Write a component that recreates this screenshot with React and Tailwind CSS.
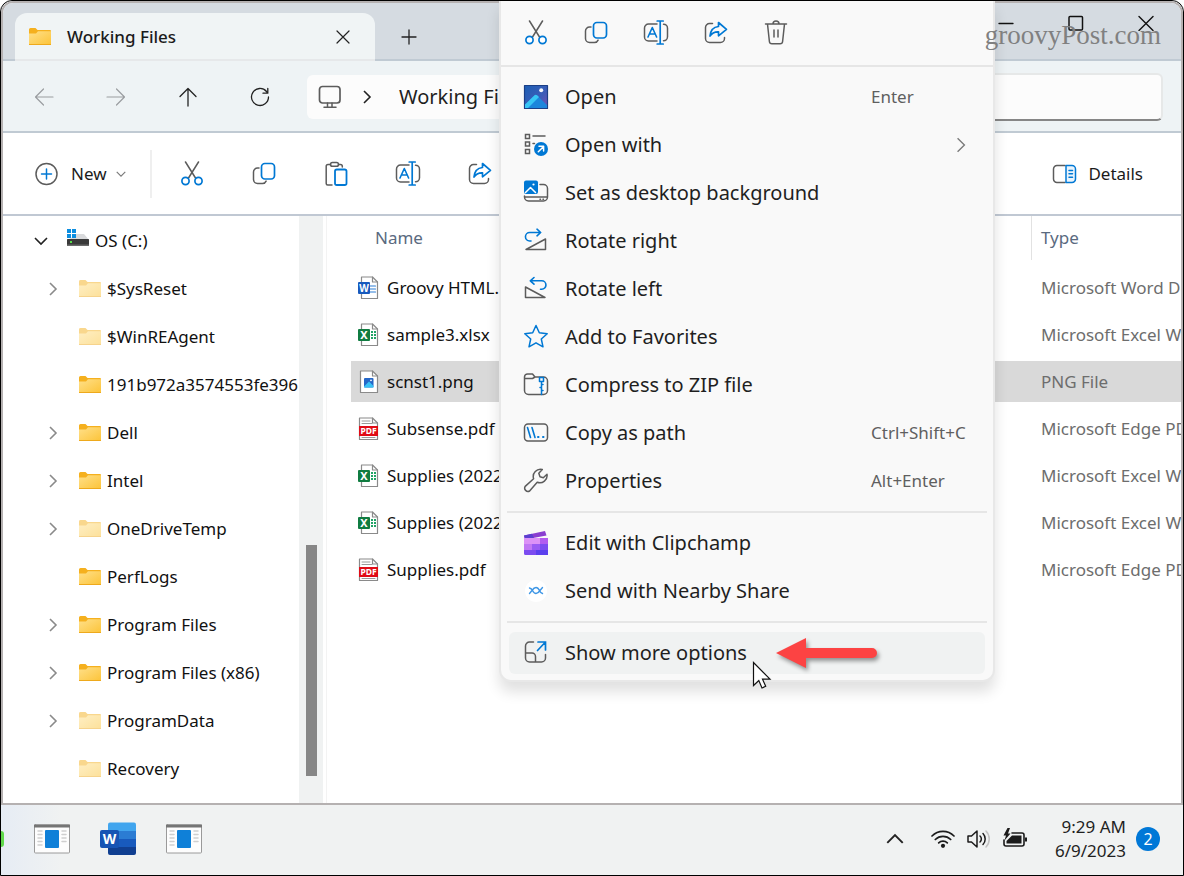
import React from "react";

const G = "#5c5c5c";
const B = "#0078d4";

function Icon({ w, h, children, className = "" }) {
  return (
    <svg
      width={w}
      height={h}
      viewBox={`0 0 ${w} ${h}`}
      fill="none"
      strokeLinecap="round"
      strokeLinejoin="round"
      className={`shrink-0 ${className}`}
      aria-hidden="true"
    >
      {children}
    </svg>
  );
}

const Cut = () => (
  <Icon w={24} h={26}>
    <path d="M5.500 1 15.500 17M18.500 1 8.500 17" stroke={G} strokeWidth="1.500" />
    <circle cx="5.500" cy="20" r="3.600" stroke={B} strokeWidth="1.700" fill="#fff" />
    <circle cx="18.500" cy="20" r="3.600" stroke={B} strokeWidth="1.700" fill="#fff" />
  </Icon>
);

const Copy = () => (
  <Icon w={24} h={26}>
    <path d="M7 7H5.500a4 4 0 0 0-4 4V18.500a4 4 0 0 0 4 4h5a4 4 0 0 0 3.600-2.400" stroke={G} strokeWidth="1.500" />
    <rect x="9.500" y="2.500" width="13" height="15.500" rx="3.400" stroke={B} strokeWidth="1.700" />
  </Icon>
);

const Paste = () => (
  <Icon w={24} h={26}>
    <path d="M6.500 3.500H4A1.8 1.8 0 0 0 2.200 5.300V22.500A1.500 1.500 0 0 0 3.700 24H8M14.500 3.500H16.500A1.800 1.800 0 0 1 18.300 5.300V6" stroke={G} strokeWidth="1.500" />
    <rect x="6.500" y="1.500" width="8" height="3.800" rx="1.900" stroke={G} strokeWidth="1.500" />
    <rect x="11" y="8.500" width="11.500" height="15.500" rx="1.800" stroke={B} strokeWidth="1.800" />
  </Icon>
);

const Rename = () => (
  <Icon w={26} h={26}>
    <path d="M14 4H5.500a4 4 0 0 0-4 4v9a4 4 0 0 0 4 4H14M20.500 4.200a4 4 0 0 1 4 4v8.600a4 4 0 0 1-4 4" stroke={G} strokeWidth="1.500" />
    <path d="M5 17 9.300 7.500l4.300 9.500M6.500 14h5.600" stroke={B} strokeWidth="1.600" />
    <path d="M17.200 1v23M14.200 1h6M14.200 24h6" stroke={B} strokeWidth="1.700" />
  </Icon>
);

const Share = () => (
  <Icon w={24} h={26}>
    <path d="M8.500 3.500H5.500a4 4 0 0 0-4 4v11a4 4 0 0 0 4 4h11a4 4 0 0 0 4-4v-1" stroke={G} strokeWidth="1.500" />
    <path d="M14.500 2.500 22.500 9.300l-8 6.500v-4C10.500 11.600 8 12.800 6 16 6.500 10.500 9.500 7 14.500 6.500Z" stroke={B} strokeWidth="1.700" />
  </Icon>
);

const Trash = () => (
  <Icon w={24} h={26}>
    <path d="M1.500 4h21M3.500 4l1.900 17.500a2.500 2.500 0 0 0 2.500 2.300h8.200a2.500 2.500 0 0 0 2.500-2.300L20.500 4M9 4a3 3 0 0 1 6 0M10 10v7M14 10v7" stroke={G} strokeWidth="1.500" />
  </Icon>
);

const Folder = ({ faded }) => (
  <Icon w={22} h={18} className={faded ? "opacity-50" : ""}>
    <defs>
      <linearGradient id="folderFace" x1="0" y1="0" x2="1" y2="1">
        <stop offset="0" stopColor="#ffe08a" />
        <stop offset="1" stopColor="#fcc43a" />
      </linearGradient>
    </defs>
    <path d="M0 1.500A1.500 1.500 0 0 1 1.500 0H6.500L8.500 2H21a1 1 0 0 1 1 1V8H0Z" fill="#f5b01e" />
    <path d="M0 5.500H7L9 3.200H22V16.500H0Z" fill="url(#folderFace)" />
    <path d="M0 16.500H22" stroke="#eea91c" strokeWidth="1" strokeLinecap="butt" />
  </Icon>
);

const Drive = () => (
  <Icon w={22} h={18}>
    <path d="M4 9 8 5H17L22 11H0Z" fill="#d9dadc" />
    <rect x="0" y="10" width="22" height="7" rx="0.500" fill="#3a3a3a" />
    <rect x="0" y="15.500" width="22" height="1.500" fill="#6b6b6b" />
    <rect x="3" y="12" width="2" height="2" fill="#57e04a" />
    <path d="M0 0H4V4H0ZM5 0H9V4H5ZM0 5H4V9H0ZM5 5H9V9H5Z" fill="#0c8ee0" />
  </Icon>
);

const Chevron = ({ dir = "right", color = "#7a7a7a", size = 14, sw = 1.6 }) => {
  const d = {
    right: "M4 1 10 7 4 13",
    down: "M1 4 7 10 13 4",
    up: "M1 10 7 4 13 10",
  }[dir];
  return (
    <svg width={size} height={size} viewBox="0 0 14 14" fill="none" stroke={color} strokeWidth={sw} className="shrink-0" aria-hidden="true">
      <path d={d} />
    </svg>
  );
};

const Sheet = ({ children, dx = 3 }) => (
  <Icon w={22} h={24}>
    <path d={`M${dx + 0.500} 1H14.500L19.500 6V22.500H${dx + 0.500}Z`} fill="#fff" stroke="#8a8a8a" strokeWidth="1.200" />
    <path d="M14.500 1V6H19.500" stroke="#8a8a8a" strokeWidth="1.200" />
    {children}
  </Icon>
);

const glyph = { fill: "#fff", fontFamily: "Noto Sans, sans-serif", fontWeight: 700, textAnchor: "middle" };

const WordFile = () => (
  <Sheet>
    <path d="M12 10H17.500M12 13H17.500M12 16H17.500" stroke="#2b7cd3" strokeWidth="1.200" />
    <rect x="0" y="6" width="12" height="12" rx="1" fill="#185abd" />
    <text x="6" y="15.500" fontSize="10" {...glyph}>W</text>
  </Sheet>
);
const ExcelFile = () => (
  <Sheet>
    <path d="M13 9H18M13 12H18M13 15H18" stroke="#21a366" strokeWidth="1.800" strokeDasharray="2 1" strokeLinecap="butt" />
    <rect x="0" y="6" width="12" height="12" rx="1" fill="#107c41" />
    <text x="6" y="16" fontSize="11" {...glyph}>X</text>
  </Sheet>
);
const PdfFile = () => (
  <Sheet dx={1}>
    <path d="M4 4H12M4 6.500H14M4 20.500H17" stroke="#9a9a9a" strokeWidth="1" />
    <rect x="1" y="9" width="19" height="10" fill="#e00b16" />
    <text x="10.500" y="17" fontSize="8.500" {...glyph}>PDF</text>
  </Sheet>
);
const PngFile = () => (
  <Sheet dx={2}>
    <rect x="6" y="8" width="9.500" height="9.500" rx="1" fill="#2567c8" />
    <path d="M6 16.500 11 11.500 15.500 16v1.500H6Z" fill="#39c2f5" />
    <circle cx="13" cy="10.300" r="0.900" fill="#fff" />
  </Sheet>
);

const PhotosApp = () => (
  <Icon w={26} h={26}>
    <defs>
      <linearGradient id="photoSky" x1="0" y1="0" x2="1" y2="1">
        <stop offset="0" stopColor="#1c5fb4" />
        <stop offset="0.600" stopColor="#3c5cb8" />
        <stop offset="1" stopColor="#7a4fb5" />
      </linearGradient>
    </defs>
    <rect x="1.500" y="1.500" width="23" height="23" fill="url(#photoSky)" stroke="#1b3f86" strokeWidth="1.200" />
    <path d="M2 21 11.500 11.500a2 2 0 0 1 2.600 0L24 21V24H2Z" fill="#1c86dc" />
    <path d="M2 20.500 11.500 11.200a2 2 0 0 1 2.600 0L16 13 5 24H2Z" fill="#37c5f5" />
    <circle cx="18.200" cy="6.300" r="2" fill="#f3f6fb" />
  </Icon>
);
const OpenWith = () => (
  <Icon w={26} h={26}>
    <path d="M2.500 2.500H6.500V6.500H2.500ZM2.500 10H6.500V14H2.500ZM2.500 17.500H6.500V21.500H2.500ZM10 4H22M10 11.500H11.500" stroke={G} strokeWidth="1.500" strokeLinejoin="miter" />
    <circle cx="18" cy="17" r="7" fill={B} />
    <path d="M15.300 19.800 20.300 14.700M16 14.300H20.600V18.900" stroke="#fff" strokeWidth="1.500" />
  </Icon>
);
const DesktopBg = () => (
  <Icon w={26} h={26}>
    <path d="M17 4.500H20.500A4 4 0 0 1 24.500 8.500V17A4 4 0 0 1 20.500 21H5.500A4 4 0 0 1 1.500 17V16M1.500 17H24.500M17 19.200H17.500M20 19.200H20.500" stroke={G} strokeWidth="1.500" />
    <rect x="1" y="0.500" width="14" height="13.500" rx="2" fill={B} />
    <path d="M2.500 12.500 7.500 7.500 12.500 12.500" stroke="#fff" strokeWidth="1.500" />
    <circle cx="10.500" cy="4.500" r="1.100" fill="#fff" />
  </Icon>
);
const RotateR = () => (
  <Icon w={26} h={26}>
    <path d="M8 13H6.700A4.200 4.200 0 0 1 6.700 4.500H17.500M14 1.200 17.700 4.500 14 7.800" stroke={B} strokeWidth="1.600" />
    <path d="M3 21.500H22.500V11Z" stroke={G} strokeWidth="1.500" />
  </Icon>
);
const RotateL = () => (
  <Icon w={26} h={26}>
    <path d="M17.500 13.300H18.700A4.200 4.200 0 0 0 18.700 4.800H7.500M11 1.500 7.300 4.800 11 8.100" stroke={B} strokeWidth="1.600" />
    <path d="M2.500 21.500V11L22 21.500Z" stroke={G} strokeWidth="1.500" />
  </Icon>
);
const Star = () => (
  <Icon w={26} h={26}>
    <path d="M13 1.500 16.300 8.800 24.200 9.700 18.300 15 20 22.800 13 18.800 6 22.800 7.700 15 1.800 9.700 9.700 8.800Z" stroke={B} strokeWidth="1.500" />
  </Icon>
);
const Zip = () => (
  <Icon w={26} h={26}>
    <path d="M1.500 6.500V5A3 3 0 0 1 4.500 2H9.500L12 5H20.500A4 4 0 0 1 24.500 9V18.500A4 4 0 0 1 20.500 22.500H5.500A4 4 0 0 1 1.500 18.500V6.500H9.500L12 5" stroke={G} strokeWidth="1.500" />
    <path d="M16.500 5.500H20.500V9.500H16.500ZM18.500 9.500V22.500M18.500 12.500H20M18.500 15.500H17M18.500 18.500H20" stroke={B} strokeWidth="1.500" />
  </Icon>
);
const CopyPath = () => (
  <Icon w={26} h={26}>
    <rect x="1.500" y="4" width="23" height="17" rx="3.500" stroke={G} strokeWidth="1.500" />
    <path d="M4.500 7.500 7.500 17.500M9 7.500 12 17.500" stroke={B} strokeWidth="1.600" />
    <path d="M15 17H15.500M20 17H20.500" stroke={B} strokeWidth="2" />
  </Icon>
);
const Wrench = () => (
  <Icon w={26} h={26}>
    <path d="M19.300 1.600 15.800 5.300 17 8.700 20.300 9.700 24 6.300A7.300 7.300 0 0 1 14.200 14.300L6.600 23A3.300 3.300 0 0 1 2.200 18.400L10.600 10.700A7.200 7.200 0 0 1 19.300 1.600Z" stroke={G} strokeWidth="1.500" />
  </Icon>
);
const Clipchamp = () => (
  <Icon w={26} h={26}>
    <path d="M1 5.500 22 1 23.500 5.500 2 9.500Z" fill="#8a3fd0" />
    <path d="M1 5.500 9 3.800 11 7.900 2 9.500Z" fill="#5b3fd0" />
    <path d="M1 8H25V23.500A1.500 1.500 0 0 1 23.500 25H2.500A1.500 1.500 0 0 1 1 23.500Z" fill="#7c4cf0" />
    <path d="M1 8H17V14H1Z" fill="#dc92f7" />
    <path d="M17 8H25V14H17Z" fill="#b25cf0" />
    <path d="M1 14H9V20H1Z" fill="#c178f4" />
    <path d="M9 14H17V20H9Z" fill="#9a5cf3" />
    <path d="M13 20H25V25H13Z" fill="#5b40ee" />
  </Icon>
);
const Nearby = () => (
  <Icon w={26} h={26}>
    <circle cx="13" cy="13" r="11" fill="#fff" />
    <path d="M6.500 10Q8.500 10.500 9.500 12.500 11 15.500 13 15.500 15 15.500 17 12.500L19.500 9.500M6.500 15.500 9 12.500Q11 9.500 13 9.500 15 9.500 16.500 12.500 17.500 15 19.500 15.500" stroke="#3f97e6" strokeWidth="1.400" />
  </Icon>
);
const MoreOpts = () => (
  <Icon w={26} h={26}>
    <path d="M10.500 2H6.500A4 4 0 0 0 2.500 6V18A4 4 0 0 0 6.500 22H18.500A4 4 0 0 0 22.500 18V14.500M2.500 13H9A3.500 3.500 0 0 1 12.500 16.500V22" stroke={G} strokeWidth="1.500" />
    <path d="M14.500 10.500 22 2.500M15 2H22.500V10" stroke={B} strokeWidth="1.700" strokeLinejoin="miter" />
  </Icon>
);

const MENU = [
  [PhotosApp, "Open", "Enter"],
  [OpenWith, "Open with", ">"],
  [DesktopBg, "Set as desktop background"],
  [RotateR, "Rotate right"],
  [RotateL, "Rotate left"],
  [Star, "Add to Favorites"],
  [Zip, "Compress to ZIP file"],
  [CopyPath, "Copy as path", "Ctrl+Shift+C"],
  [Wrench, "Properties", "Alt+Enter"],
];
const MENU2 = [
  [Clipchamp, "Edit with Clipchamp"],
  [Nearby, "Send with Nearby Share"],
];

const TREE = [
  ["$SysReset", true, true],
  ["$WinREAgent", false, true],
  ["191b972a3574553fe396", false, false],
  ["Dell", true, false],
  ["Intel", true, false],
  ["OneDriveTemp", true, true],
  ["PerfLogs", false, false],
  ["Program Files", true, false],
  ["Program Files (x86)", true, false],
  ["ProgramData", true, true],
  ["Recovery", false, true],
];

const FILES = [
  [WordFile, "Groovy HTML.docx", "Microsoft Word Document"],
  [ExcelFile, "sample3.xlsx", "Microsoft Excel Worksheet"],
  [PngFile, "scnst1.png", "PNG File"],
  [PdfFile, "Subsense.pdf", "Microsoft Edge PDF Document"],
  [ExcelFile, "Supplies (2022).xlsx", "Microsoft Excel Worksheet"],
  [ExcelFile, "Supplies (2022).xlsx", "Microsoft Excel Worksheet"],
  [PdfFile, "Supplies.pdf", "Microsoft Edge PDF Document"],
];

function MenuItem({ item, active }) {
  const [I, label, extra] = item;
  return (
    <button
      type="button"
      role="menuitem"
      className={`mx-2 my-[3px] flex h-[42px] items-center rounded-md pl-3.5 text-left text-xl text-[#1f1f1f] ${active ? "bg-[#f0f2f2]" : ""}`}
    >
      <I />
      <span className="ml-4 flex-1 whitespace-nowrap">{label}</span>
      {extra === ">" && (
        <span className="mr-4">
          <Chevron size={16} sw={1.2} />
        </span>
      )}
      {extra && extra !== ">" && <span className="w-[114px] whitespace-nowrap text-[17px] text-[#5f5f5f]">{extra}</span>}
    </button>
  );
}

function ContextMenu() {
  return (
    <div
      role="menu"
      aria-label="File actions"
      className="absolute left-[498px] top-0 z-10 flex w-[496px] flex-col rounded-b-xl border-x-2 border-b-2 border-[#e8e8e8] bg-[#f9f9f9] pb-[3px] shadow-[0_10px_14px_rgba(0,0,0,0.12)]"
    >
      <div className="flex h-16 items-center pl-[5px]">
        {[[Cut, "Cut"], [Copy, "Copy"], [Rename, "Rename"], [Share, "Share"], [Trash, "Delete"]].map(([I, n]) => (
          <button key={n} type="button" role="menuitem" aria-label={n} className="flex h-12 w-[60px] items-center justify-center">
            <I />
          </button>
        ))}
      </div>
      <div className="mb-1.5 h-0.5 bg-[#e6e6e6]" />
      {MENU.map((m) => <MenuItem key={m[1]} item={m} />)}
      <div className="mx-1.5 my-1.5 h-0.5 bg-[#e6e6e6]" />
      {MENU2.map((m) => <MenuItem key={m[1]} item={m} />)}
      <div className="mx-1.5 my-1.5 h-0.5 bg-[#e6e6e6]" />
      <MenuItem item={[MoreOpts, "Show more options"]} active />
      <svg width="110" height="42" viewBox="0 0 110 42" className="absolute bottom-[5px] left-[272px] drop-shadow-[2px_3px_2px_rgba(0,0,0,0.4)]" aria-hidden="true">
        <path d="M3 20 33 5V15H99a5 5 0 0 1 0 10H33V35Z" fill="#fc4343" />
      </svg>
      <svg width="20" height="29" viewBox="0 0 20 29" className="absolute -bottom-2.5 left-[251px]" aria-hidden="true">
        <path d="M1.500 1.500V24.500L6.800 19.500 10 27 13.700 25.300 10.500 18.200H18Z" fill="#fff" stroke="#111" strokeWidth="1.200" />
      </svg>
    </div>
  );
}

function TitleBar() {
  return (
    <header className="flex h-[58px] shrink-0 items-end border-b-2 border-[#c0cad3] bg-[#d5dbe1]">
      <div className="-mb-0.5 ml-3 flex h-12 w-[360px] items-center rounded-t-xl border-b-2 border-[#e6e8ea] bg-[#f0f4f5] pl-3.5 pr-4 pt-0.5">
        <Folder />
        <span className="ml-4 flex-1 text-[17px] font-medium text-[#1b1b1b]">Working Files</span>
        <button type="button" aria-label="Close tab" className="flex h-8 w-8 items-center justify-center">
          <Icon w={14} h={14}><path d="M1 1 13 13M13 1 1 13" stroke="#222" strokeWidth="1.200" /></Icon>
        </button>
      </div>
      <button type="button" aria-label="New tab" className="ml-4 flex h-11 w-9 items-center justify-center">
        <Icon w={16} h={16}><path d="M8 1V15M1 8H15" stroke="#222" strokeWidth="1.300" /></Icon>
      </button>
      <div className="ml-auto flex self-start">
        <button type="button" aria-label="Minimize" className="flex h-10 w-[70px] items-center justify-center">
          <Icon w={16} h={16}><path d="M1 8.500H15" stroke="#111" strokeWidth="1.300" /></Icon>
        </button>
        <button type="button" aria-label="Maximize" className="flex h-10 w-[70px] items-center justify-center">
          <Icon w={16} h={16}><rect x="1" y="1.500" width="13.500" height="13.500" rx="1" stroke="#111" strokeWidth="1.500" /></Icon>
        </button>
        <button type="button" aria-label="Close" className="flex h-10 w-[70px] items-center justify-center">
          <Icon w={16} h={16}><path d="M1 1.500 15 15.500M15 1.500 1 15.500" stroke="#111" strokeWidth="1.400" /></Icon>
        </button>
      </div>
    </header>
  );
}

function NavBar() {
  const btn = "flex h-11 w-[72px] items-center justify-center";
  return (
    <nav aria-label="Location" className="flex h-[72px] shrink-0 items-center border-b-2 border-[#c0cad3] bg-[#eef3f5] pl-[5px] pr-[18px] pt-0.5">
      <button type="button" aria-label="Back" className={btn}>
        <Icon w={20} h={20}><path d="M19 10H1.500M9.500 2 1.500 10 9.500 18" stroke="#9a9da0" strokeWidth="1.200" /></Icon>
      </button>
      <button type="button" aria-label="Forward" className={btn}>
        <Icon w={20} h={20}><path d="M1 10H18.500M10.500 2 18.500 10 10.500 18" stroke="#9a9da0" strokeWidth="1.200" /></Icon>
      </button>
      <button type="button" aria-label="Up" className={btn}>
        <Icon w={20} h={20}><path d="M10 19V1.500M2 9.500 10 1.500 18 9.500" stroke="#222" strokeWidth="1.300" /></Icon>
      </button>
      <button type="button" aria-label="Refresh" className={btn}>
        <Icon w={20} h={20}><path d="M18.500 10A8.500 8.500 0 1 1 16.500 4.500L17.500 6M17.800 1.500V6.200H13" stroke="#222" strokeWidth="1.300" /></Icon>
      </button>
      <div className="ml-[11px] flex h-11 flex-1 items-center rounded-md bg-[#fcfcfc] pl-[11px] text-[#1f1f1f]">
        <Icon w={24} h={24}>
          <rect x="1.500" y="1.500" width="20.500" height="16.500" rx="3" stroke={G} strokeWidth="1.700" />
          <path d="M9.500 18V22M14 18V22M6 22.200H18" stroke={G} strokeWidth="1.500" />
        </Icon>
        <span className="ml-[18px]"><Chevron color="#222" size={14} /></span>
        <a href="#working-files" className="ml-[25px] whitespace-nowrap text-xl">Working Files</a>
      </div>
      <input
        type="search"
        aria-label="Search Working Files"
        className="ml-3 h-12 w-[380px] rounded-md border-2 border-[#e6e8e8] border-b-[#868686] bg-[#fcfcfc] px-3 text-lg outline-none"
      />
    </nav>
  );
}

function Toolbar() {
  return (
    <div role="toolbar" aria-label="Commands" className="flex h-[83px] shrink-0 items-center border-b-2 border-[#c0c8d3] bg-white pl-8 text-[17px] text-[#1b1b1b]">
      <button type="button" className="flex items-center">
        <Icon w={24} h={24}>
          <circle cx="11.500" cy="12" r="10.500" stroke={G} strokeWidth="1.500" />
          <path d="M11.500 7V17M6.500 12H16.500" stroke={B} strokeWidth="1.500" />
        </Icon>
        <span className="ml-3">New</span>
        <span className="ml-[9px]"><Chevron dir="down" size={10} sw={1.6} /></span>
      </button>
      <span className="ml-6 h-12 w-0.5 bg-[#efefef]" />
      <div className="ml-1 flex">
        {[[Cut, "Cut"], [Copy, "Copy"], [Paste, "Paste"], [Rename, "Rename"], [Share, "Share"]].map(([I, n]) => (
          <button key={n} type="button" aria-label={n} className="flex h-12 w-[72px] items-center justify-center">
            <I />
          </button>
        ))}
      </div>
      <button type="button" className="ml-auto mr-[38px] flex items-center">
        <Icon w={25} h={20}>
          <path d="M13 1.500H5A3.500 3.500 0 0 0 1.500 5V15A3.500 3.500 0 0 0 5 18.500H13" stroke={G} strokeWidth="1.500" />
          <path d="M14 1.500H20A3.500 3.500 0 0 1 23.500 5V15A3.500 3.500 0 0 1 20 18.500H14ZM17 6.500H20.500M17 9.800H20.500M17 13.200H20.500" stroke={B} strokeWidth="1.500" fill="#eaf4fc" />
        </Icon>
        <span className="ml-[11px]">Details</span>
      </button>
    </div>
  );
}

function Sidebar() {
  return (
    <aside className="flex w-[324px] shrink-0">
      <ul className="min-w-0 flex-1 overflow-hidden pt-px text-[17px] text-[#111]">
        <li>
          <button type="button" className="flex h-12 w-full items-center pl-[31px]">
            <Chevron dir="down" color="#222" />
            <span className="-mt-1.5 ml-[19px]"><Drive /></span>
            <span className="ml-1.5 whitespace-nowrap">OS (C:)</span>
          </button>
        </li>
        {TREE.map(([name, open, faded]) => (
          <li key={name}>
            <button type="button" className="flex h-12 w-full items-center pl-[43px]">
              <span className="w-[33px]">{open && <Chevron color="#8a8a8a" />}</span>
              <Folder faded={faded} />
              <span className="ml-1.5 whitespace-nowrap">{name}</span>
            </button>
          </li>
        ))}
      </ul>
      <div className="flex w-6 flex-col justify-end bg-[#f0f2f2] pb-[27px] pl-[7px]">
        <div className="h-[231px] w-[11px] bg-[#878787]" />
      </div>
      <div className="ml-[3px] w-px bg-[#f3f3f3]" />
    </aside>
  );
}

function FileTable() {
  return (
    <section className="min-w-0 flex-1 overflow-hidden pl-6">
      <table className="w-full table-fixed border-collapse text-[17px]">
        <thead>
          <tr className="h-12 text-left align-top text-[#5a6a80]">
            <th scope="col" className="p-0 font-normal">
              <span className="flex h-11 items-center pl-6">Name</span>
            </th>
            <th scope="col" className="w-[150px] p-0 font-normal">
              <span className="flex h-11 items-center border-l border-[#e2e2e2] pl-[9px]">Type</span>
            </th>
          </tr>
        </thead>
        <tbody>
          {FILES.map(([I, name, type], i) => {
            const bg = name === "scnst1.png" ? "bg-[#d9d9d9]" : "";
            return (
              <tr key={i} className="h-[47px]">
                <td className="p-0">
                  <div className={`flex h-[41px] items-center overflow-hidden whitespace-nowrap pl-[7px] text-[#111] ${bg}`}>
                    <I />
                    <span className="ml-[7px]">{name}</span>
                  </div>
                </td>
                <td className="p-0">
                  <div className={`flex h-[41px] items-center overflow-hidden whitespace-nowrap pl-2.5 text-[#6d6d6d] ${bg}`}>{type}</div>
                </td>
              </tr>
            );
          })}
        </tbody>
      </table>
    </section>
  );
}

const AppWindow = () => (
  <Icon w={36} h={30}>
    <rect x="0.500" y="1" width="35" height="28" rx="1" fill="#fdfdfd" stroke="#9a9a9a" strokeWidth="1" />
    <path d="M0 2H36" stroke="#757575" strokeWidth="3" strokeLinecap="butt" />
    <rect x="11" y="6" width="14" height="18" rx="1" fill="#0f80d8" />
    <path d="M4 7H8M4 10.500H8M4 14H8M4 17.500H8M4 21H8M28 7H32M28 10.500H32M28 14H32M28 17.500H32" stroke="#cfcfcf" strokeWidth="1.500" />
  </Icon>
);
const WordApp = () => (
  <Icon w={36} h={34}>
    <path d="M10 0.500H34A2 2 0 0 1 36 2.500V9H8V2.500A2 2 0 0 1 10 0.500Z" fill="#41a5ee" />
    <rect x="8" y="9" width="28" height="8" fill="#2b7cd3" />
    <rect x="8" y="17" width="28" height="8" fill="#185abd" />
    <path d="M8 25H36V31A2 2 0 0 1 34 33H10A2 2 0 0 1 8 31Z" fill="#103f91" />
    <rect x="0" y="8" width="19" height="18" rx="2" fill="#1754b4" />
    <text x="9.500" y="22" fontSize="14" {...glyph}>W</text>
  </Icon>
);

function Taskbar() {
  return (
    <footer className="flex h-[70px] shrink-0 items-center bg-[linear-gradient(90deg,#e6ecf4,#f0f2f2_60px)] pb-0.5 pr-[23px] text-[#1f1f1f]">
      <span className="h-4 w-[3px] rounded-r-lg bg-[#5fd84a]" />
      <div className="ml-[30px] flex gap-[30px]">
        <button type="button" aria-label="App window 1" className="flex items-center"><AppWindow /></button>
        <button type="button" aria-label="Word" className="flex items-center"><WordApp /></button>
        <button type="button" aria-label="App window 2" className="flex items-center"><AppWindow /></button>
      </div>
      <div className="ml-auto flex items-center">
        <button type="button" aria-label="Show hidden icons"><Chevron dir="up" size={18} sw={1.5} color="#222" /></button>
        <div className="ml-[27px] flex items-center gap-3">
          <Icon w={24} h={20}>
            <path d="M1 7A15.500 15.500 0 0 1 23 7M4.300 10.500A11 11 0 0 1 19.700 10.500M7.700 13.800A6.300 6.300 0 0 1 16.300 13.800" stroke="#1b1b1b" strokeWidth="1.700" />
            <circle cx="12" cy="16.800" r="2.100" fill="#1b1b1b" />
          </Icon>
          <Icon w={24} h={20}>
            <path d="M1 7H4.500L10 2V18L4.500 13H1Z" stroke="#1b1b1b" strokeWidth="1.500" />
            <path d="M13 7A4 4 0 0 1 13 13M16 4.500A8 8 0 0 1 16 15.500" stroke="#1b1b1b" strokeWidth="1.500" />
            <path d="M19 2A11.500 11.500 0 0 1 19 18" stroke="#c2c2c2" strokeWidth="1.500" />
          </Icon>
          <Icon w={24} h={22}>
            <path d="M9 5H19A2 2 0 0 1 21 7V16A2 2 0 0 1 19 18H3A2 2 0 0 1 1 16V12" stroke="#1b1b1b" strokeWidth="1.600" />
            <path d="M9 7.500H18.500V15.500H3.500V13Z" fill="#1b1b1b" />
            <path d="M22 9.500H24V13.500H22ZM4.500 0 0.500 7.500H3L1.500 12.500 7.500 5.500H5L7 0Z" fill="#1b1b1b" />
          </Icon>
        </div>
        <div className="ml-7 text-right text-[17px] leading-6">
          <div>9:29 AM</div>
          <div>6/9/2023</div>
        </div>
        <span className="ml-2.5 flex h-6 w-6 items-center justify-center rounded-full bg-[#0078d7] text-base text-white">2</span>
      </div>
    </footer>
  );
}

export default function App() {
  return (
    <div className="relative flex h-screen flex-col overflow-hidden rounded-t-xl border border-black bg-[#f0f2f2] font-['Noto_Sans',sans-serif]">
      <div className="flex min-h-0 flex-1 flex-col overflow-hidden rounded-t-xl border-2 border-[#b5b1b1] bg-white">
        <TitleBar />
        <NavBar />
        <Toolbar />
        <main className="flex min-h-0 flex-1 overflow-hidden">
          <Sidebar />
          <FileTable />
        </main>
      </div>
      <Taskbar />
      <ContextMenu />
      <div className="pointer-events-none absolute right-[22px] top-4 z-20 font-['Liberation_Serif',serif] text-[27px] leading-9 text-[#808080]">groovyPost.com</div>
    </div>
  );
}
